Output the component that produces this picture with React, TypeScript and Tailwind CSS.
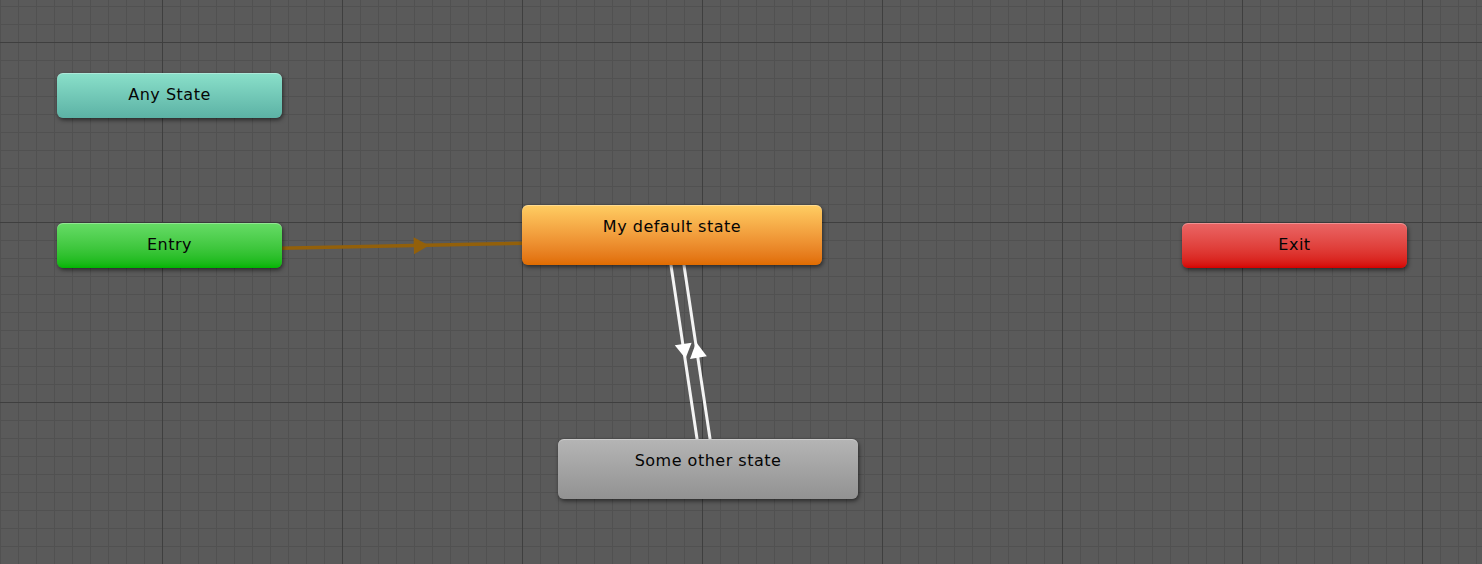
import React from "react";

type NodeProps = {
  label: string;
  x: number;
  y: number;
  w: number;
  h: number;
  grad: string;
};

function StateNode({ label, x, y, w, h, grad }: NodeProps) {
  return (
    <div
      className={`absolute rounded-[6px] ${grad} shadow-[inset_0_1px_0_rgba(255,255,255,0.3),1px_2px_4px_rgba(0,0,0,0.55)] flex justify-center pt-[12px] text-[16px] leading-[19px] tracking-[0.5px] text-[#050505] [font-family:'DejaVu_Sans',sans-serif]`}
      style={{ left: x, top: y, width: w, height: h }}
    >
      {label}
    </div>
  );
}

export default function App() {
  return (
    <div className="relative w-[1482px] h-[564px] overflow-hidden bg-[#5a5a5a]">
      <svg className="absolute inset-0" width={1482} height={564}>
        <defs>
          <pattern id="minor" width={18} height={18} patternUnits="userSpaceOnUse" x={0} y={6}>
            <rect x={0} y={0} width={1} height={18} fill="#515151" />
            <rect x={0} y={0} width={18} height={1} fill="#515151" />
          </pattern>
          <pattern id="major" width={180} height={180} patternUnits="userSpaceOnUse" x={162} y={42}>
            <rect x={0} y={0} width={1} height={180} fill="#3f3f3f" />
            <rect x={0} y={0} width={180} height={1} fill="#3f3f3f" />
          </pattern>
        </defs>
        <rect width={1482} height={564} fill="url(#minor)" />
        <rect width={1482} height={564} fill="url(#major)" />

        {/* Entry -> default transition */}
        <line x1={280} y1={248.2} x2={524} y2={243.2} stroke="#93600a" strokeWidth={3.5} />
        <polygon points="429,245.5 413.6,237.2 414,254.2" fill="#93600a" />

        {/* default <-> other transitions */}
        <line x1={670.5} y1={262} x2={697.5} y2={442} stroke="#f4f4f4" strokeWidth={3} />
        <line x1={683.5} y1={262} x2={710.5} y2={442} stroke="#f4f4f4" strokeWidth={3} />
        <polygon points="685.5,358.5 691.6,342.7 674.8,345.3" fill="#ffffff" />
        <polygon points="696.2,342.2 706.8,356.3 690,358.9" fill="#ffffff" />
      </svg>

      <StateNode
        label="Any State"
        x={57}
        y={73}
        w={225}
        h={45}
        grad="bg-gradient-to-b from-[#8ae0ca] to-[#5cb2a5]"
      />
      <StateNode
        label="Entry"
        x={57}
        y={223}
        w={225}
        h={45}
        grad="bg-gradient-to-b from-[#66dc66] to-[#00b600]"
      />
      <StateNode
        label="My default state"
        x={522}
        y={205}
        w={300}
        h={60}
        grad="bg-gradient-to-b from-[#ffcd62] to-[#e06c00]"
      />
      <StateNode
        label="Some other state"
        x={558}
        y={439}
        w={300}
        h={60}
        grad="bg-gradient-to-b from-[#b5b5b5] to-[#929292]"
      />
      <StateNode
        label="Exit"
        x={1182}
        y={223}
        w={225}
        h={45}
        grad="bg-gradient-to-b from-[#ea6565] to-[#d60000]"
      />
    </div>
  );
}
